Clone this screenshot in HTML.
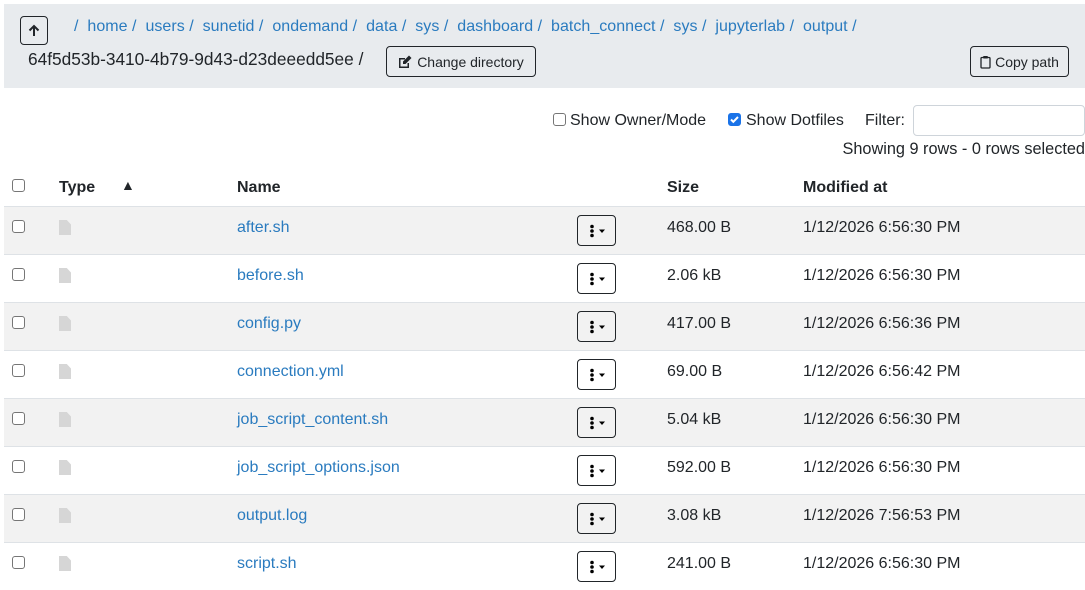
<!DOCTYPE html>
<html><head><meta charset="utf-8"><style>
*{box-sizing:border-box;margin:0;padding:0}
body{width:1085px;height:575px;overflow:hidden;background:#fff;font-family:"Liberation Sans",Arial,sans-serif;font-size:16px;color:#212529;position:relative}
.a{position:absolute;white-space:nowrap}
a,.lk{color:#2a7bbf;text-decoration:none}
.bar{position:absolute;left:4px;top:4px;width:1081px;height:84px;background:#e8ebee}
.btn{position:absolute;border:1px solid #212529;border-radius:4px;background:transparent;font-size:14px;display:flex;align-items:center;justify-content:center}
.cb{position:absolute;width:13px;height:13px;border:1px solid #767676;border-radius:3px;background:#fff}
.row{position:absolute;left:4px;width:1081px;height:48px;border-top:1px solid #dee2e6}
.g{background:#f2f2f2}
.file{position:absolute;left:59px;width:12px;height:15px;background:#d6d6d6;clip-path:polygon(0 0,65% 0,100% 30%,100% 100%,0 100%)}
.hd{font-weight:bold}
</style></head><body>
<div class="bar"></div>
<div class="btn" style="left:20px;top:16px;width:28px;height:29px"><svg width="14" height="14" viewBox="0 0 14 14"><path d="M7 12V2M2.5 6.5L7 2l4.5 4.5" stroke="#212529" stroke-width="2" fill="none"/></svg></div>
<div class="a lk" style="left:74px;top:18px;letter-spacing:0.03px">/ &nbsp;home / &nbsp;users / &nbsp;sunetid / &nbsp;ondemand / &nbsp;data / &nbsp;sys / &nbsp;dashboard / &nbsp;batch_connect / &nbsp;sys / &nbsp;jupyterlab / &nbsp;output /</div>
<div class="a" style="left:28px;top:49px;font-size:17.3px">64f5d53b-3410-4b79-9d43-d23deeedd5ee /</div>
<div class="btn" style="left:386px;top:46px;width:150px;height:31px"><svg width="14" height="13" viewBox="0 0 14 13" style="margin-right:5px"><path d="M1 3h6v1.5H2.5v7h7V8H11v5H1z" fill="#212529"/><path d="M11 0.5l2.5 2.5-6 6H5V6.5z" fill="#212529"/></svg>Change directory</div>
<div class="btn" style="left:970px;top:46px;width:99px;height:31px"><svg width="11" height="14" viewBox="0 0 11 14" style="margin-right:4px"><rect x="1" y="2.5" width="9" height="10.5" rx="1" stroke="#212529" stroke-width="1.3" fill="none"/><rect x="3.3" y="1" width="4.4" height="2.5" fill="#212529"/></svg>Copy path</div>

<div class="cb" style="left:553px;top:113px"></div>
<div class="a" style="left:570px;top:112px">Show Owner/Mode</div>
<div class="cb" style="left:728px;top:113px;background:#1a73e8;border-color:#1a73e8"><svg width="11" height="11" viewBox="0 0 11 11" style="position:absolute;left:0;top:0"><path d="M2 5.5l2.3 2.3L9 3" stroke="#fff" stroke-width="2" fill="none"/></svg></div>
<div class="a" style="left:746px;top:112px">Show Dotfiles</div>
<div class="a" style="left:865px;top:112px">Filter:</div>
<div class="a" style="left:913px;top:105px;width:172px;height:31px;border:1px solid #ced4da;border-radius:4px;background:#fff"></div>
<div class="a" style="right:0;top:140px;font-size:16.3px">Showing 9 rows - 0 rows selected</div>

<div class="cb" style="left:12px;top:179px"></div>
<div class="a hd" style="left:59px;top:179px">Type</div>
<div class="a" style="left:121px;top:177px;font-size:14px">&#9650;</div>
<div class="a hd" style="left:237px;top:179px">Name</div>
<div class="a hd" style="left:667px;top:179px">Size</div>
<div class="a hd" style="left:803px;top:179px">Modified at</div>

<div id="rows"></div>
<script>
var d=[["after.sh","468.00 B","1/12/2026 6:56:30 PM"],["before.sh","2.06 kB","1/12/2026 6:56:30 PM"],["config.py","417.00 B","1/12/2026 6:56:36 PM"],["connection.yml","69.00 B","1/12/2026 6:56:42 PM"],["job_script_content.sh","5.04 kB","1/12/2026 6:56:30 PM"],["job_script_options.json","592.00 B","1/12/2026 6:56:30 PM"],["output.log","3.08 kB","1/12/2026 7:56:53 PM"],["script.sh","241.00 B","1/12/2026 6:56:30 PM"]];
var h="";d.forEach(function(r,i){var t=206+i*48;
h+='<div class="row'+(i%2==0?' g':'')+'" style="top:'+t+'px"></div>';
h+='<div class="cb" style="left:12px;top:'+(t+14)+'px"></div>';
h+='<div class="file" style="top:'+(t+14)+'px"></div>';
h+='<div class="a lk" style="left:237px;top:'+(t+13)+'px">'+r[0]+'</div>';
h+='<div class="btn" style="left:577px;top:'+(t+9)+'px;width:39px;height:31px"><svg width="22" height="14" viewBox="0 0 22 14"><circle cx="6" cy="2.5" r="1.8"/><circle cx="6" cy="7" r="1.8"/><circle cx="6" cy="11.5" r="1.8"/><path d="M13 5.5h6l-3 3.5z"/></svg></div>';
h+='<div class="a" style="left:667px;top:'+(t+13)+'px">'+r[1]+'</div>';
h+='<div class="a" style="left:803px;top:'+(t+13)+'px">'+r[2]+'</div>';});
document.getElementById("rows").innerHTML=h;
</script>
</body></html>
